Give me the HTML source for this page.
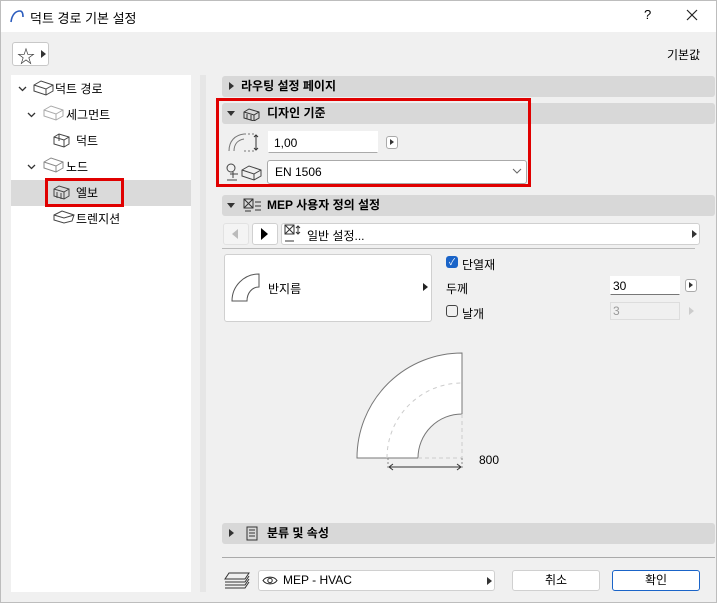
<!DOCTYPE html>
<html><head><meta charset="utf-8"><style>
*{box-sizing:border-box;margin:0;padding:0}
body{width:717px;height:603px;overflow:hidden;background:#f0f0f0;font-family:"Liberation Sans","Noto Sans CJK KR",sans-serif;font-size:12px;color:#000;position:relative}
.a{position:absolute}
.hdr{position:absolute;left:222px;width:493px;height:21px;background:#d8d8d8;border-radius:3px;font-weight:bold;font-size:12px;line-height:21px}
.tri{position:absolute;width:0;height:0}
.tr{border-top:4px solid transparent;border-bottom:4px solid transparent;border-left:5px solid #333}
.td{border-left:4px solid transparent;border-right:4px solid transparent;border-top:5px solid #333}
.box{position:absolute;background:#fff;border:1px solid #d0d0d0;border-radius:3px}
.red{position:absolute;border:3px solid #e00000}
.sb{position:absolute;width:12px;height:13px;border:1px solid #aaa;border-radius:3px;background:#fff}
</style></head><body>
<div class="a" style="left:0;top:0;width:717px;height:603px;border:1px solid #bdbdbd"></div>
<div class="a" style="left:1px;top:1px;width:715px;height:31px;background:#fff"></div>
<svg class="a" style="left:9px;top:8px" width="16" height="16"><path d="M2 14 C3 6 7 3 11 3 C13 3 14 5 14 9" fill="none" stroke="#2a5bbd" stroke-width="1.6"/></svg>
<div class="a" style="left:30px;top:8px;font-size:13px">덕트 경로 기본 설정</div>
<div class="a" style="left:644px;top:7px;font-size:13px">?</div>
<svg class="a" style="left:686px;top:9px" width="12" height="12"><path d="M1 1L11 11M11 1L1 11" stroke="#222" stroke-width="1.2"/></svg>
<div class="box" style="left:12px;top:42px;width:37px;height:24px;border-color:#c8c8c8"></div>
<div class="a" style="left:17px;top:43px;font-size:18px;color:#333">☆</div>
<div class="tri tr" style="left:41px;top:50px"></div>
<div class="a" style="left:667px;top:46px;font-size:12px">기본값</div>
<div class="a" style="left:11px;top:75px;width:180px;height:517px;background:#fff"></div>
<div class="a" style="left:200px;top:75px;width:6px;height:517px;background:#e6e6e6"></div>
<div class="a" style="left:11px;top:180px;width:180px;height:26px;background:#dadada"></div>
<svg class="a" style="left:0;top:75px" width="60" height="100" fill="none" stroke="#333" stroke-width="1.3"><path d="M19 12l3.5 3.5 3.5-3.5 M28 38l3.5 3.5 3.5-3.5 M28 90l3.5 3.5 3.5-3.5"/></svg>
<div class="a" style="left:55px;top:80px">덕트 경로</div>
<div class="a" style="left:66px;top:106px">세그먼트</div>
<div class="a" style="left:76px;top:132px">덕트</div>
<div class="a" style="left:66px;top:158px">노드</div>
<div class="a" style="left:76px;top:184px">엘보</div>
<div class="a" style="left:76px;top:210px">트렌지션</div>
<svg class="a" style="left:0;top:75px" width="200" height="160" fill="none" stroke="#444" stroke-width="1">
<path d="M34 10 l7-4 12 4 0 6 -7 4 -12-4z M34 10 l12 4 7-4 M46 14 v6"/>
<path d="M44 35 l7-4 12 4 0 6 -7 4 -12-4z M44 35 l12 4 7-4 M56 39 v6" stroke="#aaa"/>
<path d="M54 62 l5-3 10 3 0 7 -5 3 -10-3z M54 62 l10 3 5-3 M64 65 v7 M59 59 v7" />
<path d="M44 87 l7-4 12 4 0 6 -7 4 -12-4z M44 87 l12 4 7-4 M56 91 v6" stroke="#888"/>
<path d="M54 114 l5-3 10 3 0 7 -5 3 -10-3z M54 114 l10 3 5-3 M64 117 v7 M57 117 v6 M61 118 v6"/>
<path d="M54 140 l8-4 12 4 -2 6 -8 2 -10-3z M54 140 l10 3 10-3"/>
</svg>
<div class="red" style="left:45px;top:178px;width:79px;height:29px"></div>

<div class="hdr" style="top:76px"><div class="tri tr" style="left:7px;top:6px"></div><span style="position:absolute;left:19px">라우팅 설정 페이지</span></div>
<div class="hdr" style="top:103px"><div class="tri td" style="left:5px;top:8px"></div><span style="position:absolute;left:45px">디자인 기준</span>
<svg class="a" style="left:20px;top:4px" width="20" height="14" fill="none" stroke="#333"><path d="M2 5 l5-3 10 3 0 6 -5 3 -10-3z M2 5 l10 3 5-3 M12 8 v6 M5 7v5 M9 8v5"/></svg></div>
<svg class="a" style="left:226px;top:131px" width="34" height="22" fill="none" stroke="#777"><path d="M3 20 C3 10 9 4 18 3 M8 20 C8 13 12 9 18 8" /><path d="M18 3 h10 M18 20 h10" stroke-dasharray="2 2"/><path d="M30 4 v15 M28 6 l2-2 2 2 M28 17 l2 2 2-2" stroke="#333"/></svg>
<div class="box" style="left:268px;top:131px;width:110px;height:22px;border-color:#fff;border-bottom-color:#aaa;border-radius:0"></div>
<div class="a" style="left:274px;top:136px">1,00</div>
<div class="sb" style="left:386px;top:136px"></div><div class="tri tr" style="left:390px;top:139px;border-top-width:3px;border-bottom-width:3px;border-left-width:4px"></div>
<svg class="a" style="left:224px;top:160px" width="40" height="24" fill="none" stroke="#444"><circle cx="7" cy="8" r="4"/><path d="M6 14 h8 M9 12 v6 M3 20 h10"/><path d="M18 10 l7-4 12 4 0 6 -7 4 -12-4z M18 10 l12 4 7-4 M30 14 v6"/></svg>
<div class="box" style="left:267px;top:160px;width:260px;height:24px;border-color:#aaa"></div>
<div class="a" style="left:275px;top:165px">EN 1506</div>
<svg class="a" style="left:512px;top:168px" width="10" height="6"><path d="M1 1l4 4 4-4" fill="none" stroke="#666"/></svg>
<div class="red" style="left:216px;top:98px;width:315px;height:89px"></div>

<div class="hdr" style="top:195px"><div class="tri td" style="left:5px;top:8px"></div><span style="position:absolute;left:45px">MEP 사용자 정의 설정</span>
<svg class="a" style="left:20px;top:2px" width="20" height="17" fill="none" stroke="#333"><rect x="2" y="2" width="9" height="9"/><path d="M2 2l9 9 M11 2l-9 9 M13 5h6 M13 9h6 M13 13h6 M3 14h6"/></svg></div>
<div class="box" style="left:223px;top:223px;width:26px;height:22px;background:#f4f4f4;border-color:#e2e2e2"></div><div class="tri" style="left:232px;top:229px;border-top:5px solid transparent;border-bottom:5px solid transparent;border-right:6px solid #bbb"></div>
<div class="box" style="left:252px;top:223px;width:26px;height:22px"></div><div class="tri tr" style="left:261px;top:228px;border-top-width:6px;border-bottom-width:6px;border-left-width:7px;border-left-color:#000"></div>
<div class="box" style="left:281px;top:223px;width:419px;height:22px"></div>
<svg class="a" style="left:284px;top:224px" width="20" height="20" fill="none" stroke="#333"><rect x="1" y="1" width="9" height="9"/><path d="M1 1l9 9 M10 1l-9 9 M14 2v8 M12 4l2-2 2 2 M12 8l2 2 2-2 M1 17h9"/></svg>
<div class="a" style="left:307px;top:227px">일반 설정...</div>
<div class="tri tr" style="left:692px;top:230px"></div>
<div class="a" style="left:222px;top:248px;width:473px;height:1px;background:#bbb"></div>
<div class="box" style="left:224px;top:254px;width:208px;height:68px"></div>
<svg class="a" style="left:230px;top:271px" width="32" height="32" fill="none" stroke="#555"><path d="M2 30 C2 15 14 3 29 3 V16 C22 16 17 22 17 30 Z"/></svg>
<div class="a" style="left:268px;top:280px">반지름</div>
<div class="tri tr" style="left:423px;top:283px;border-left-color:#222"></div>
<div class="a" style="left:446px;top:256px;width:12px;height:12px;background:#1a64c8;border-radius:3px;color:#fff;font-size:9px;line-height:12px;text-align:center">✓</div>
<div class="a" style="left:462px;top:256px">단열재</div>
<div class="a" style="left:446px;top:280px">두께</div>
<div class="box" style="left:610px;top:276px;width:70px;height:19px;border-radius:0;border-color:#fff;border-bottom-color:#777"></div>
<div class="a" style="left:613px;top:279px">30</div>
<div class="sb" style="left:685px;top:279px"></div><div class="tri tr" style="left:689px;top:282px;border-top-width:3px;border-bottom-width:3px;border-left-width:4px"></div>
<div class="a" style="left:446px;top:305px;width:12px;height:12px;border:1px solid #444;border-radius:3px"></div>
<div class="a" style="left:462px;top:305px">날개</div>
<div class="a" style="left:610px;top:302px;width:70px;height:18px;border:1px solid #ddd"></div>
<div class="a" style="left:613px;top:304px;color:#999">3</div>
<div class="tri tr" style="left:689px;top:307px;border-left-color:#ccc"></div>
<svg class="a" style="left:340px;top:340px" width="180" height="140" fill="none">
<path d="M17 118 A105 105 0 0 1 122 13 V74 A44 44 0 0 0 78 118 Z" fill="#fff" stroke="#777"/>
<path d="M47 118 A75 75 0 0 1 122 43" stroke="#ccc" stroke-dasharray="4 4"/>
<path d="M78 118 H122 V74" stroke="#ccc" stroke-dasharray="4 3"/>
<path d="M48 118 v10 M122 118 v10" stroke="#888" stroke-dasharray="2 2"/>
<path d="M49 127 H121 M49 127 l4-3 M49 127 l4 3 M121 127 l-4-3 M121 127 l-4 3" stroke="#333"/>
</svg>
<div class="a" style="left:479px;top:453px">800</div>

<div class="hdr" style="top:523px"><div class="tri tr" style="left:7px;top:6px"></div><span style="position:absolute;left:45px">분류 및 속성</span>
<svg class="a" style="left:24px;top:3px" width="12" height="15" fill="none" stroke="#333"><rect x="1" y="1" width="10" height="13"/><path d="M3 4h6M3 7h6M3 10h6"/></svg></div>
<div class="a" style="left:222px;top:557px;width:493px;height:1px;background:#aaa"></div>
<svg class="a" style="left:224px;top:571px" width="26" height="20" fill="none" stroke="#333"><path d="M5 2h20l-4 6H1z M1 11h20l4-6 M1 14h20l4-6 M1 17h20l4-6"/></svg>
<div class="box" style="left:258px;top:570px;width:237px;height:21px"></div>
<svg class="a" style="left:262px;top:575px" width="16" height="11" fill="none" stroke="#222"><path d="M1 5.5C4 1 12 1 15 5.5C12 10 4 10 1 5.5Z"/><circle cx="8" cy="5.5" r="2.2"/></svg>
<div class="a" style="left:283px;top:573px">MEP - HVAC</div>
<div class="tri tr" style="left:487px;top:577px"></div>
<div class="box" style="left:512px;top:570px;width:88px;height:21px;text-align:center;line-height:19px">취소</div>
<div class="box" style="left:612px;top:570px;width:88px;height:21px;text-align:center;line-height:19px;border-color:#1a64c8">확인</div>
</body></html>
